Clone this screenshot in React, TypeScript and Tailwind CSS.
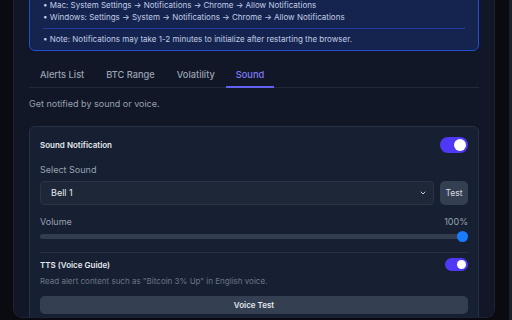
import React from "react";

function Toggle({ w, h }: { w: number; h: number }) {
  const knob = h - 4;
  return (
    <div
      className="relative rounded-full bg-indigo-600"
      style={{ width: w, height: h }}
    >
      <div
        className="absolute top-[2px] rounded-full bg-white"
        style={{ width: knob, height: knob, left: w - knob - 2 }}
      />
    </div>
  );
}

export default function App() {
  return (
    <div
      className="flex h-[320px] w-[512px] overflow-hidden bg-[#090b10]"
      style={{ fontFamily: "Inter, 'Noto Sans', sans-serif" }}
    >
      <div className="w-[13px] shrink-0" />
      <div className="flex h-[318px] w-[482px] shrink-0 flex-col overflow-hidden rounded-b-[9px] border-x border-b border-[#1c2332] bg-[#111726] px-[15px]">
        {/* info box */}
        <div className="-mt-[10px] shrink-0 rounded-b-[6px] border border-[#2150d6] bg-[#14244e] px-[13px] pb-[5px] pt-[8px] text-[8px] leading-[12px] text-[#c3cde6]">
          <div>• Mac: System Settings → Notifications → Chrome → Allow Notifications</div>
          <div>• Windows: Settings → System → Notifications → Chrome → Allow Notifications</div>
          <div className="mb-[4px] mt-[5px] h-px bg-[#1f3f9e]" />
          <div>• Note: Notifications may take 1-2 minutes to initialize after restarting the browser.</div>
        </div>

        {/* tabs */}
        <div className="mt-[12px] flex h-[25px] shrink-0 border-b border-[#222a3a] text-[9.25px] font-medium">
          <div className="flex items-center px-[11px] text-[#9aa3b3]">Alerts List</div>
          <div className="flex items-center px-[11px] text-[#9aa3b3]">BTC Range</div>
          <div className="flex items-center px-[11px] text-[#9aa3b3]">Volatility</div>
          <div className="relative flex items-center px-[10px] text-[#7c7cf8]">
            Sound
            <div className="absolute bottom-[-1px] left-0 right-0 h-[2px] bg-[#6160f2]" />
          </div>
        </div>

        <div className="mt-[10px] text-[9px] leading-[12px] text-[#98a1b1]">
          Get notified by sound or voice.
        </div>

        {/* card */}
        <div className="mt-[16px] shrink-0 rounded-[6px] border border-[#283142] bg-[#172032] px-[10px] pt-[10px] pb-[10px]">
          <div className="flex h-[16px] items-center justify-between">
            <span className="text-[8px] font-semibold text-[#e3e7ee]">Sound Notification</span>
            <Toggle w={28} h={16} />
          </div>

          <div className="mt-[11px] text-[9px] leading-[12px] text-[#98a1b1]">Select Sound</div>
          <div className="mt-[5px] flex h-[24px] gap-[6px]">
            <div className="flex flex-1 items-center justify-between rounded-[4px] border border-[#2a3446] bg-[#1d2738] pl-[10px] pr-[6px]">
              <span className="text-[9px] text-[#e8ebf0]">Bell 1</span>
              <svg width="8" height="8" viewBox="0 0 24 24" fill="none" stroke="#c9ced8" strokeWidth="3" strokeLinecap="round" strokeLinejoin="round">
                <path d="M6 9l6 6 6-6" />
              </svg>
            </div>
            <div className="flex w-[28px] items-center justify-center rounded-[5px] bg-[#343f52] text-[8.5px] text-[#d5dae3]">
              Test
            </div>
          </div>

          <div className="mt-[11px] flex justify-between text-[9px] leading-[12px] text-[#98a1b1]">
            <span>Volume</span>
            <span>100%</span>
          </div>
          <div className="relative mt-[2px] flex h-[12px] items-center">
            <div className="h-[5px] w-full rounded-full bg-[#323d50]" />
            <div className="absolute right-0 top-[0.5px] h-[11px] w-[11px] rounded-full bg-[#1a7bff]" />
          </div>

          <div className="mt-[10px] h-px bg-[#283142]" />

          <div className="mt-[5px] flex h-[13px] items-center justify-between">
            <span className="text-[8px] font-semibold text-[#e3e7ee]">TTS (Voice Guide)</span>
            <Toggle w={23} h={13} />
          </div>
          <div className="mt-[4px] text-[8px] leading-[12px] text-[#6b7586]">
            Read alert content such as "Bitcoin 3% Up" in English voice.
          </div>
          <div className="mt-[9px] flex h-[18px] items-center justify-center rounded-[5px] bg-[#343f52] text-[8px] font-semibold text-[#e3e7ee]">
            Voice Test
          </div>
        </div>
      </div>
      <div className="w-[14px] shrink-0" />
      <div className="w-[3px] shrink-0 bg-[#1c212b]" />
    </div>
  );
}
